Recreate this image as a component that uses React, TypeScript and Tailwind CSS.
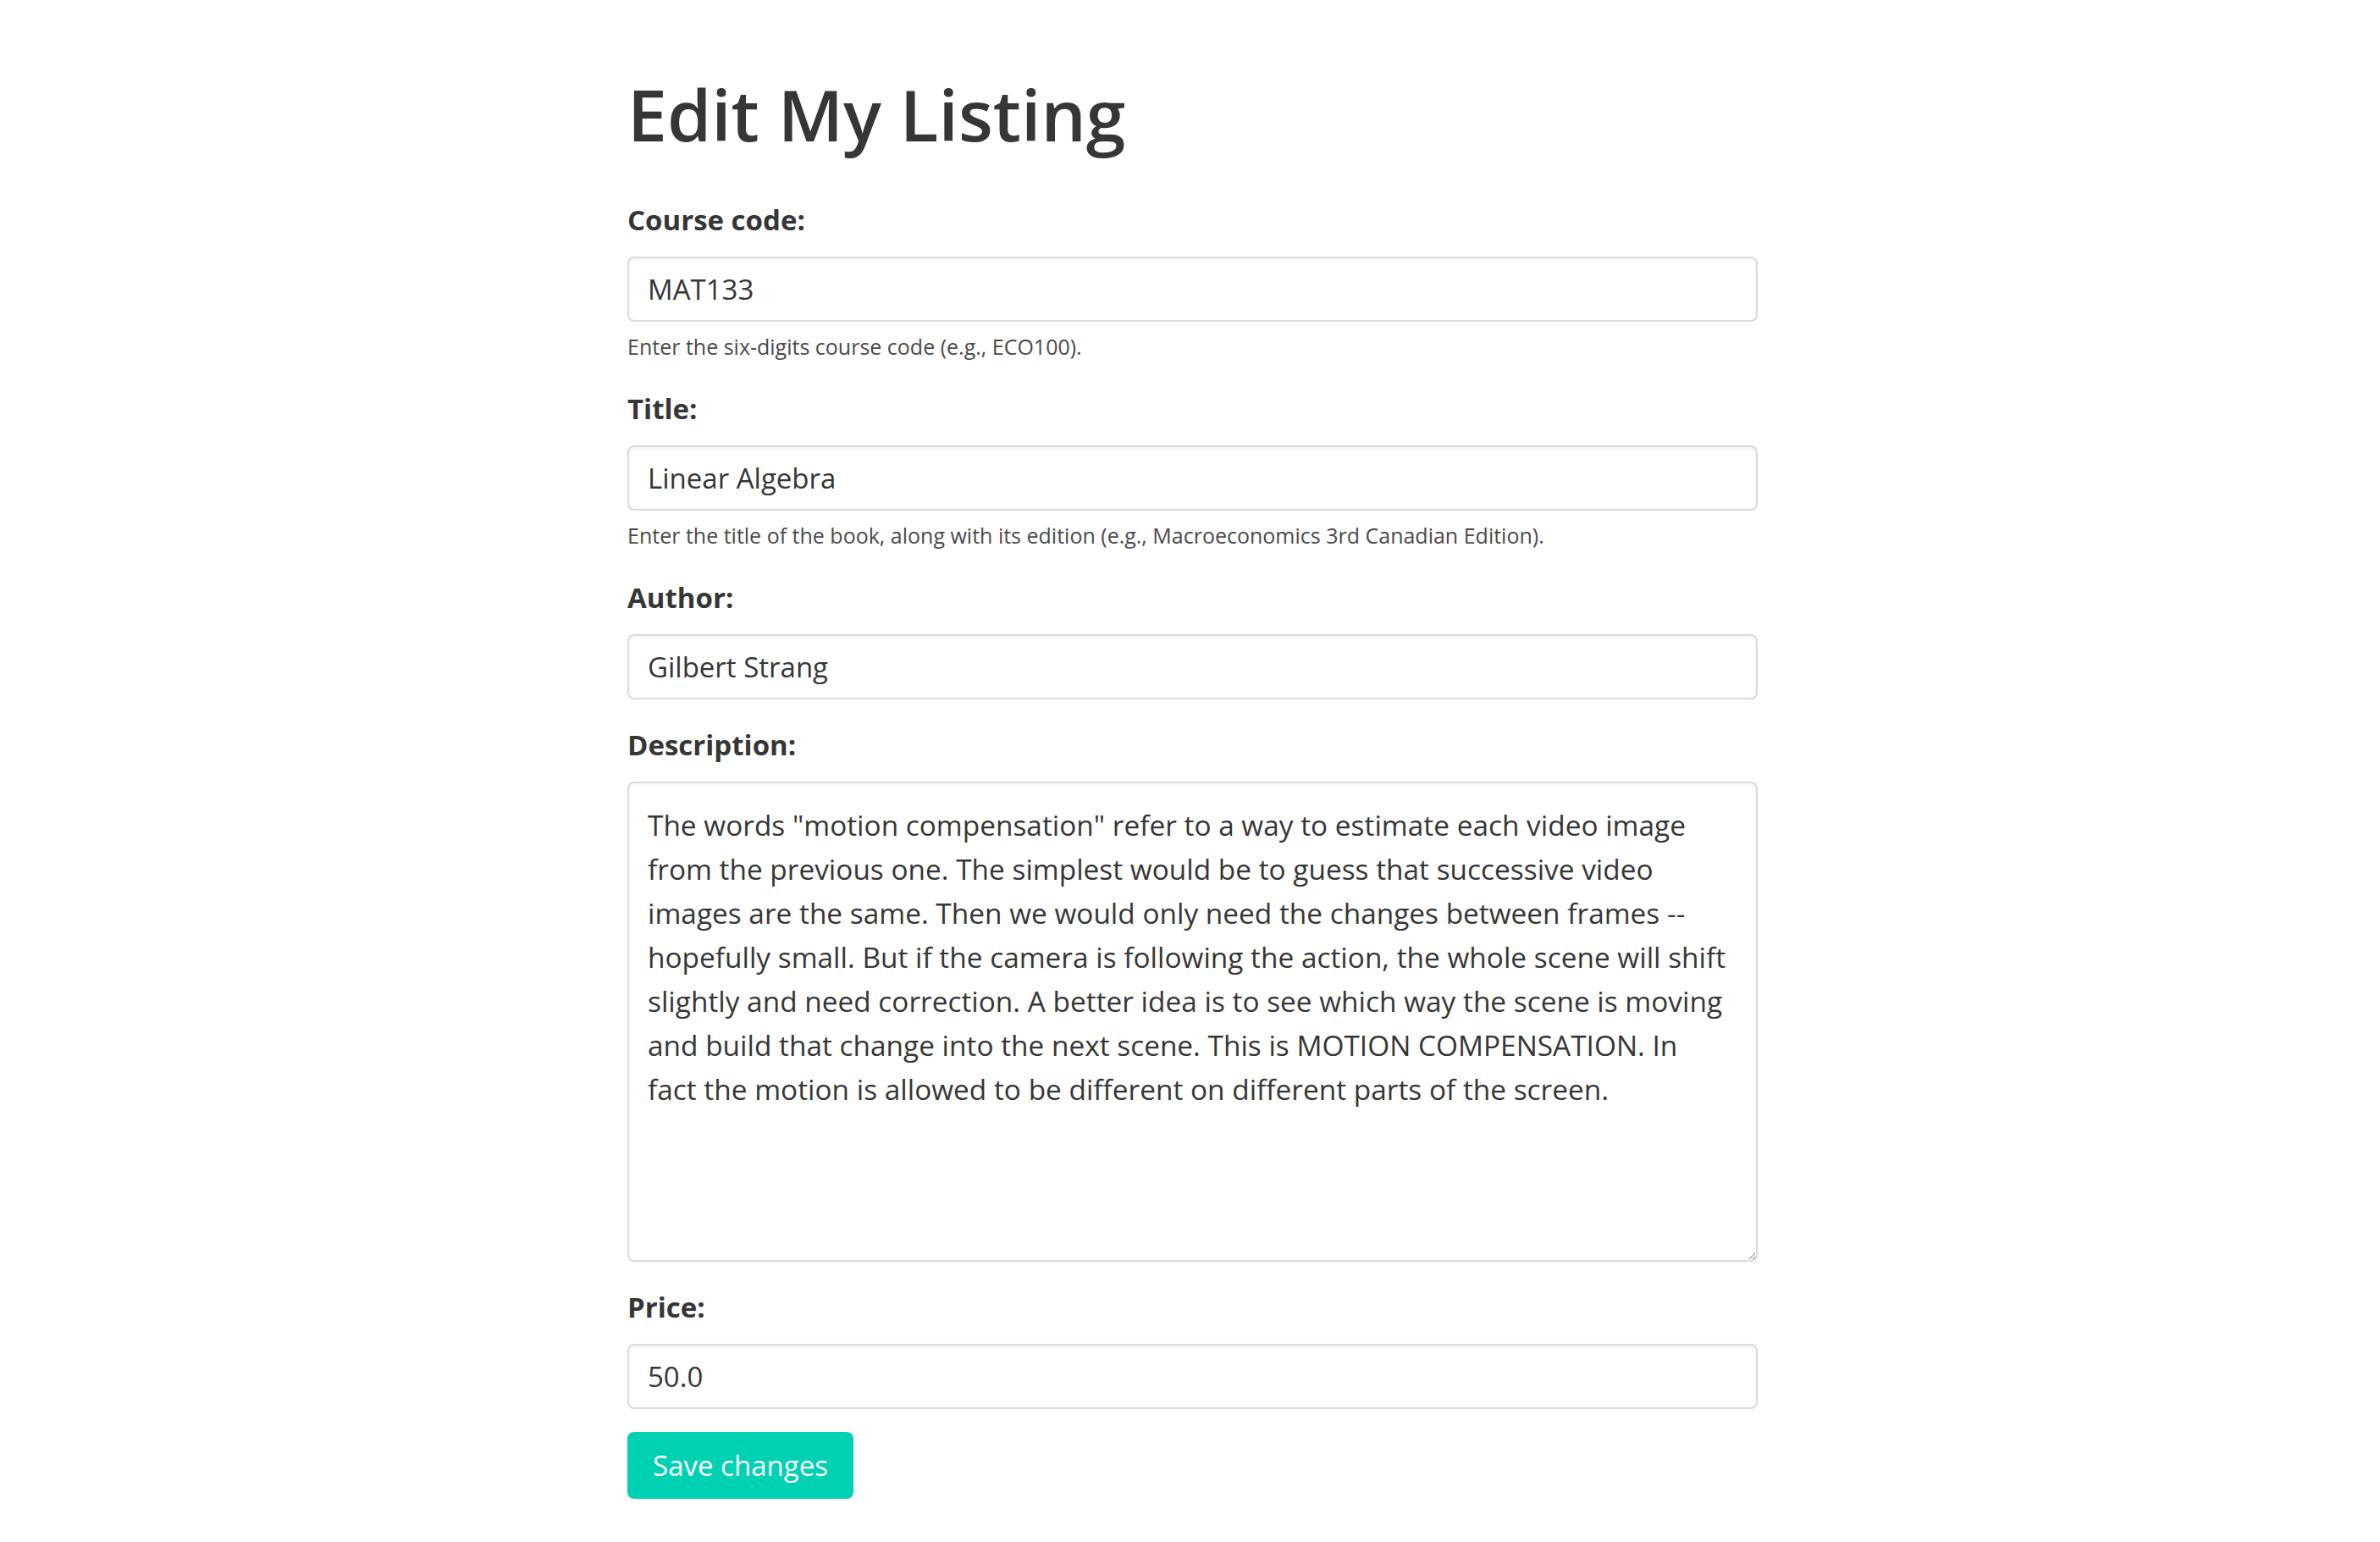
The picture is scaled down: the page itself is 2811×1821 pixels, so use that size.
import React from 'react';

const description = [
	'The words "motion compensation" refer to a way to estimate each video image',
	'from the previous one. The simplest would be to guess that successive video',
	'images are the same. Then we would only need the changes between frames --',
	'hopefully small. But if the camera is following the action, the whole scene will shift',
	'slightly and need correction. A better idea is to see which way the scene is moving',
	'and build that change into the next scene. This is MOTION COMPENSATION. In',
	'fact the motion is allowed to be different on different parts of the screen.',
].join('\n');

const font = { fontFamily: '"Open Sans", "Noto Sans", sans-serif' };

function Label({ children }: { children: React.ReactNode }) {
	return <label className="block mt-[30px] text-[33px] leading-[48px] font-bold text-[#363636]">{children}</label>;
}

function Help({ children }: { children: React.ReactNode }) {
	return <p className="mt-[10px] text-[25px] leading-[39px] text-[#4a4a4a]">{children}</p>;
}

function TextInput({ value }: { value: string }) {
	return (
		<input
			type="text"
			defaultValue={value}
			className="block mt-[19px] w-full h-[77px] px-[22px] text-[33px] text-[#363636] bg-white border-2 border-[#dbdbdb] rounded-[8px] shadow-[inset_0_2px_4px_rgba(10,10,10,0.05)] outline-none"
			style={font}
		/>
	);
}

export default function App() {
	return (
		<div className="min-h-screen bg-white pt-[84px] pb-[50px]" style={font}>
			<form className="ml-[741px] w-[1335px] flex flex-col">
				<h1 className="text-[84px] leading-[101px] font-semibold text-[#363636]">Edit My Listing</h1>

				<div className="mt-[21px]">
					<Label>Course code:</Label>
					<TextInput value="MAT133" />
					<Help>Enter the six-digits course code (e.g., ECO100).</Help>
				</div>

				<div>
					<Label>Title:</Label>
					<TextInput value="Linear Algebra" />
					<Help>Enter the title of the book, along with its edition (e.g., Macroeconomics 3rd Canadian Edition).</Help>
				</div>

				<div>
					<Label>Author:</Label>
					<TextInput value="Gilbert Strang" />
				</div>

				<div>
					<Label>Description:</Label>
					<textarea
						defaultValue={description}
						className="block mt-[19px] w-full h-[567px] pl-[22px] pr-[12px] pt-[23px] text-[33.4px] leading-[52px] text-[#363636] bg-white border-2 border-[#dbdbdb] rounded-[8px] shadow-[inset_0_2px_4px_rgba(10,10,10,0.05)] outline-none overflow-hidden"
						style={font}
					/>
				</div>

				<div>
					<Label>Price:</Label>
					<TextInput value="50.0" />
				</div>

				<div className="mt-[27px]">
					<button
						type="button"
						className="w-[267px] h-[79px] rounded-[8px] bg-[#00d1b2] text-white text-[33px]"
						style={font}
					>
						Save changes
					</button>
				</div>
			</form>
		</div>
	);
}
